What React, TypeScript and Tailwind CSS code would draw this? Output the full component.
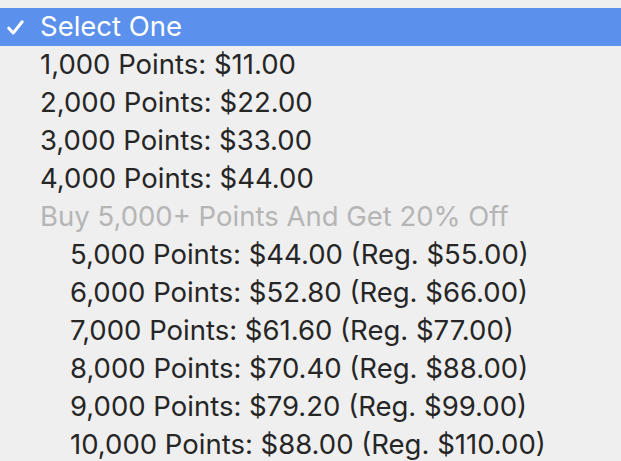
import React from 'react';

const items = [
  { label: '1,000 Points: $11.00' },
  { label: '2,000 Points: $22.00' },
  { label: '3,000 Points: $33.00' },
  { label: '4,000 Points: $44.00' },
  { label: 'Buy 5,000+ Points And Get 20% Off', group: true },
  { label: '5,000 Points: $44.00 (Reg. $55.00)', indent: true },
  { label: '6,000 Points: $52.80 (Reg. $66.00)', indent: true },
  { label: '7,000 Points: $61.60 (Reg. $77.00)', indent: true },
  { label: '8,000 Points: $70.40 (Reg. $88.00)', indent: true },
  { label: '9,000 Points: $79.20 (Reg. $99.00)', indent: true },
  { label: '10,000 Points: $88.00 (Reg. $110.00)', indent: true },
];

export default function App() {
  return (
    <div
      className="w-[621px] h-[461px] overflow-hidden bg-[#efefef] pt-2"
      style={{ fontFamily: 'Inter, "Noto Sans", sans-serif' }}
    >
      {/* selected option */}
      <div className="flex items-center h-[38px] pb-[3px] bg-[#5b91ec] text-white text-[27.5px] leading-[32px]">
        <svg className="ml-[7px] mt-[3px] w-[17px] h-[15px]" viewBox="0 0 17 15" fill="none">
          <path d="M1.8 8.2 L6.2 13 L15.2 1.8" stroke="white" strokeWidth="3" strokeLinecap="round" strokeLinejoin="round" />
        </svg>
        <span className="ml-[16px]">Select One</span>
      </div>

      {items.map((it) => (
        <div
          key={it.label}
          className={`flex items-center h-[38.1px] pb-[3px] text-[27.5px] leading-[32px] ${
            it.group ? 'text-[#b5b5b5] pl-[40px]' : it.indent ? 'text-[#262626] pl-[70px]' : 'text-[#262626] pl-[40px]'
          }`}
        >
          {it.label}
        </div>
      ))}
    </div>
  );
}
